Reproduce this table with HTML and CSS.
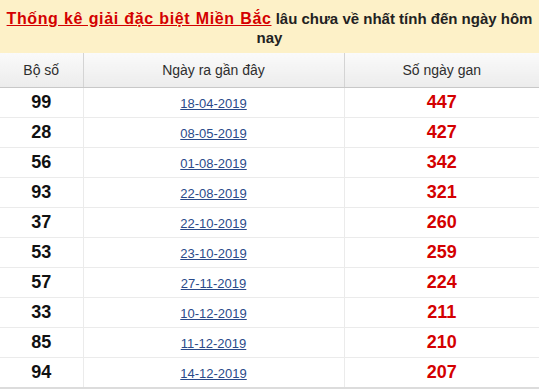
FILE: index.html
```html
<!DOCTYPE html>
<html lang="vi">
<head>
<meta charset="utf-8">
<link rel="stylesheet" href="styles.css">
</head>
<body>
<div class="banner"><h2 class="title"><a href="#" class="title-link">Thống kê giải đặc biệt Miền Bắc</a> lâu chưa về nhất tính đến ngày hôm nay</h2></div>
<table class="gan">
<colgroup><col class="c1"><col class="c2"><col class="c3"></colgroup>
<thead><tr><th>Bộ số</th><th>Ngày ra gần đây</th><th>Số ngày gan</th></tr></thead>
<tbody>
<tr><td class="num">99</td><td><a href="#" class="date">18-04-2019</a></td><td class="days">447</td></tr>
<tr><td class="num">28</td><td><a href="#" class="date">08-05-2019</a></td><td class="days">427</td></tr>
<tr><td class="num">56</td><td><a href="#" class="date">01-08-2019</a></td><td class="days">342</td></tr>
<tr><td class="num">93</td><td><a href="#" class="date">22-08-2019</a></td><td class="days">321</td></tr>
<tr><td class="num">37</td><td><a href="#" class="date">22-10-2019</a></td><td class="days">260</td></tr>
<tr><td class="num">53</td><td><a href="#" class="date">23-10-2019</a></td><td class="days">259</td></tr>
<tr><td class="num">57</td><td><a href="#" class="date">27-11-2019</a></td><td class="days">224</td></tr>
<tr><td class="num">33</td><td><a href="#" class="date">10-12-2019</a></td><td class="days">211</td></tr>
<tr><td class="num">85</td><td><a href="#" class="date">11-12-2019</a></td><td class="days">210</td></tr>
<tr><td class="num">94</td><td><a href="#" class="date">14-12-2019</a></td><td class="days">207</td></tr>
</tbody>
</table>
</body>
</html>
```
FILE: styles.css
```css
html, body { margin: 0; padding: 0; background: #fff; }
body { font-family: "Liberation Sans", Arial, sans-serif; color: #222; }
.banner { background: #fdf1c8; height: 53px; box-sizing: border-box; padding: 9px 6px 0; }
.title { margin: 0; font-size: 15px; line-height: 19px; font-weight: bold; text-align: center; color: #222; }
.title-link { font-size: 16px; letter-spacing: 0.6px; word-spacing: 0.6px; color: #d40000; text-decoration: underline; }
.gan { width: 539px; border-collapse: collapse; table-layout: fixed; }
.c1 { width: 83px; }
.c2 { width: 261px; }
.c3 { width: 195px; }
.gan th { height: 34px; padding: 0; font-size: 14px; font-weight: normal; color: #2e2e2e; background: linear-gradient(#fafafa, #ececec); border-bottom: 1px solid #c8c8c8; border-left: 1px solid #d4d4d4; }
.gan th:first-child { border-left: none; }
.gan td { height: 29px; padding: 0; text-align: center; border-bottom: 1px solid #ebebeb; border-left: 1px solid #ebebeb; }
.gan td:first-child { border-left: none; }
.gan tbody tr:last-child td { border-bottom: 2px solid #dcdcdc; }
.num { font-size: 18px; font-weight: bold; color: #111; }
.date { font-size: 13px; color: #2a4a8a; text-decoration: underline; }
.days { font-size: 18px; font-weight: bold; color: #d40000; }
```
